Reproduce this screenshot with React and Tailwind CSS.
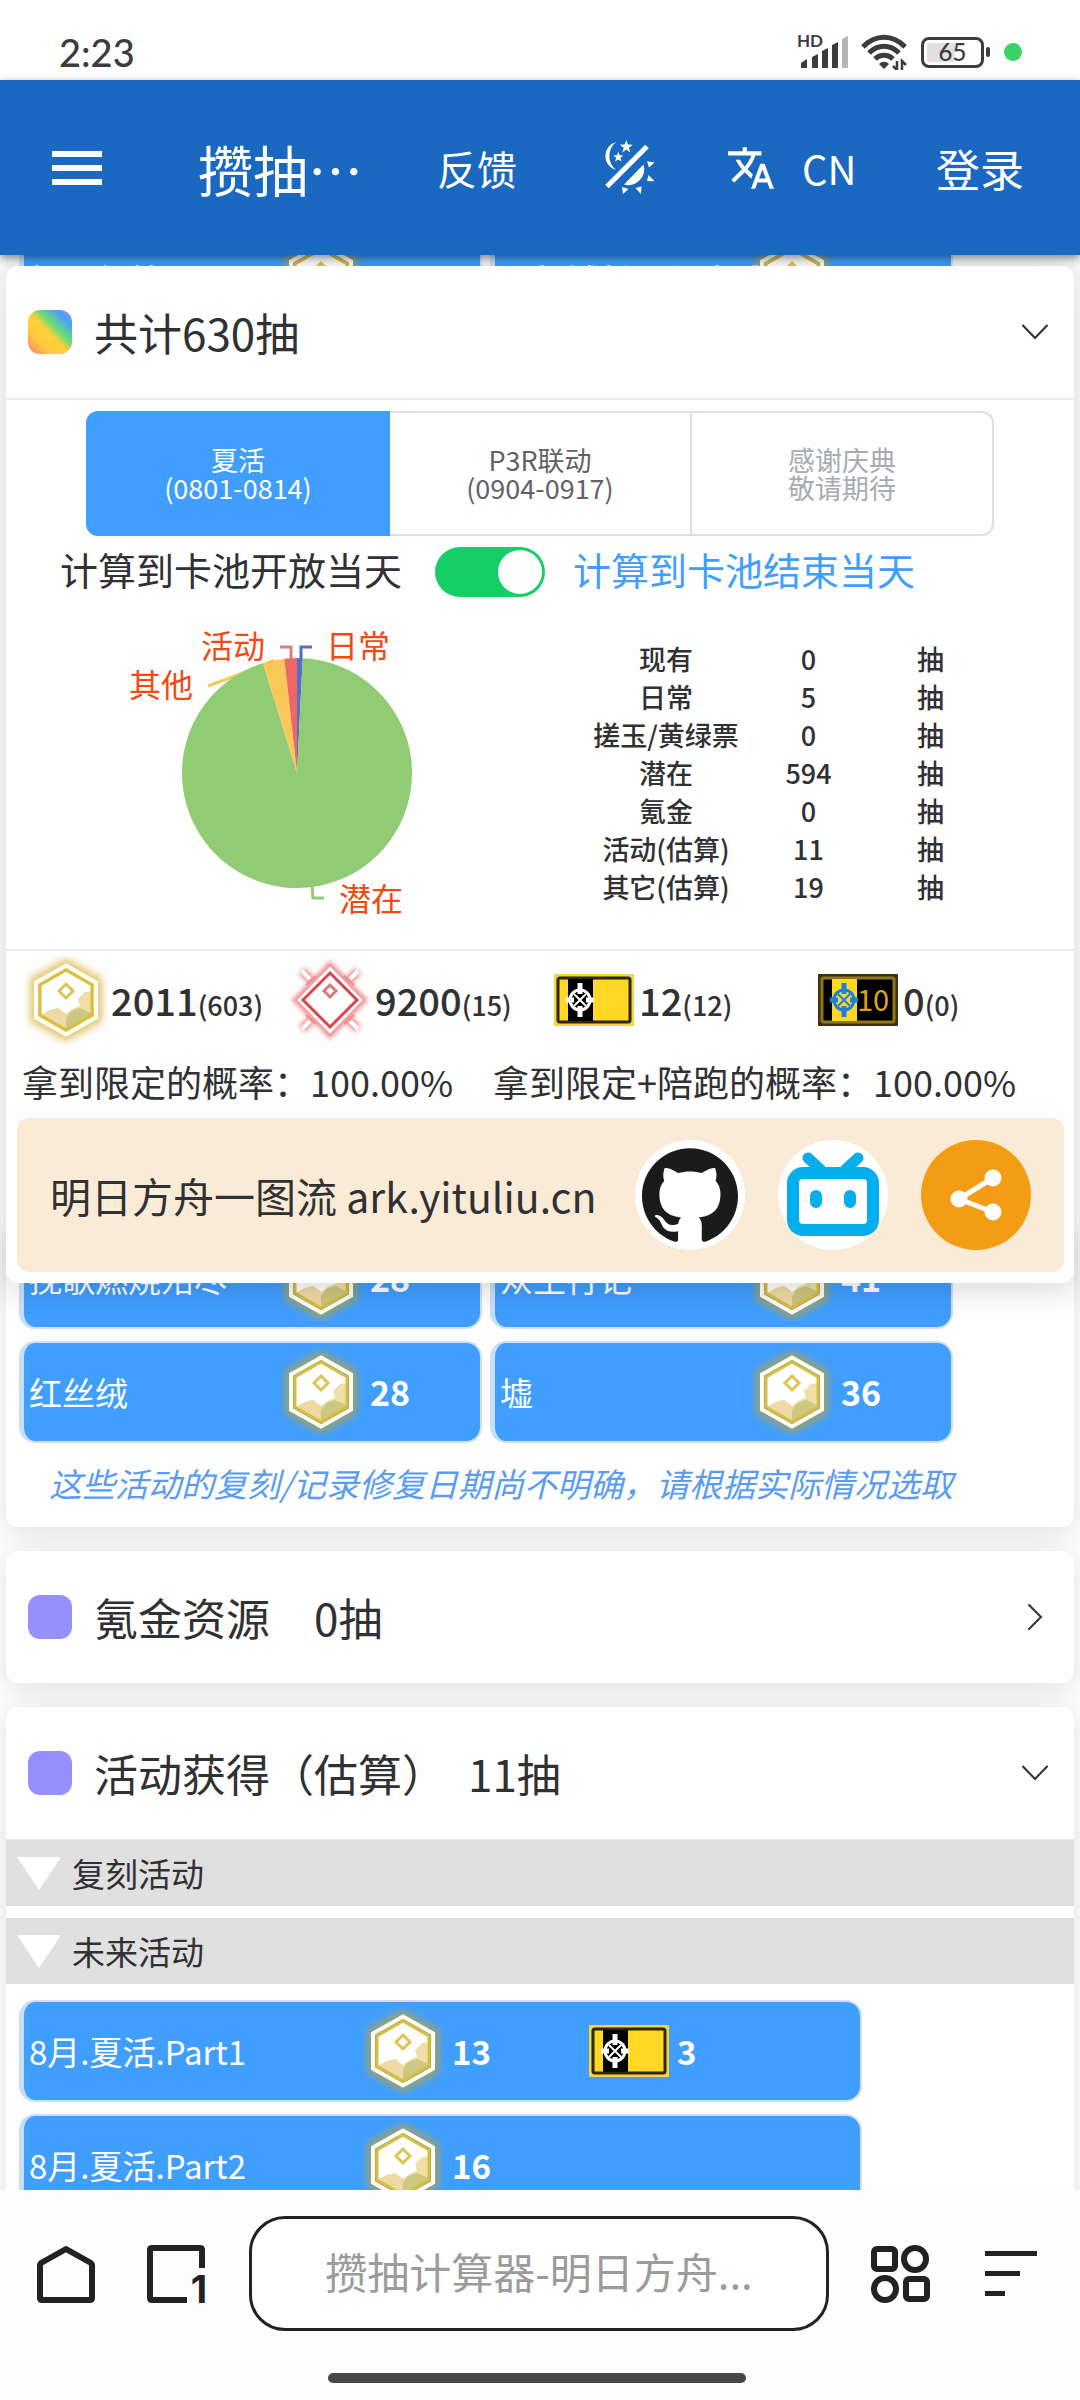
import { useState } from "react";
import { MdTranslate } from "react-icons/md";
import { SiGithub } from "react-icons/si";

const PIE = [
  { name: "日常", value: 5, color: "#5470c6" },
  { name: "潜在", value: 594, color: "#91cc75" },
  { name: "其他", value: 19, color: "#fac858" },
  { name: "活动", value: 11, color: "#ee6666" },
];

const SUMMARY = [
  { label: "现有", value: 0 },
  { label: "日常", value: 5 },
  { label: "搓玉/黄绿票", value: 0 },
  { label: "潜在", value: 594 },
  { label: "氪金", value: 0 },
  { label: "活动(估算)", value: 11 },
  { label: "其它(估算)", value: 19 },
];

const POOLS = [
  { id: "summer", name: "夏活", date: "(0801-0814)" },
  { id: "p3r", name: "P3R联动", date: "(0904-0917)" },
  { id: "thanks", name: "感谢庆典", date: "敬请期待", disabled: true },
];

/* ---------- 图标 ---------- */

function Orundum() {
  return (
    <svg viewBox="0 0 84 88" className="h-[88px] w-[84px] shrink-0" aria-hidden="true">
      <defs>
        <filter id="glow" x="-20%" y="-20%" width="140%" height="140%">
          <feGaussianBlur stdDeviation="4" />
        </filter>
      </defs>
      <path
        d="M42 8 73 25V63L42 80 11 63V25Z"
        fill="none"
        stroke="#cfa51a"
        strokeWidth="8"
        opacity="0.8"
        filter="url(#glow)"
      />
      <path d="M42 13 68 28V60L42 75 16 60V28Z" fill="#fff" />
      <path d="M68 35 61 36 54 43 56 50 50 52 42 58 34 52 26 54 17 59 42 74 67 60Z" fill="#efdfa6" />
      <path d="M42 58 34 52 26 54 17 59 42 74Z" fill="#efd9a4" />
      <path d="M47 55 56 52 67 57V60L42 74V62Z" fill="#b4b869" opacity="0.6" />
      <path d="M42 9.500 72 26.500V61.500L42 78.500 12 61.500V26.500Z" fill="none" stroke="#fffdf0" strokeWidth="4" />
      <path d="M42 14 68 29V59L42 74 16 59V29Z" fill="none" stroke="#d9bd3c" strokeWidth="3" />
      <path d="m42 28 7 7-7 7-7-7Z" fill="#fff" stroke="#dcc455" strokeWidth="3" />
    </svg>
  );
}

function Originite() {
  return (
    <svg viewBox="0 0 84 88" className="h-[88px] w-[84px] shrink-0" aria-hidden="true">
      <defs>
        <filter id="redGlow" x="-20%" y="-20%" width="140%" height="140%">
          <feGaussianBlur stdDeviation="2" />
        </filter>
      </defs>
      <g fill="none" stroke="#ee6b70" filter="url(#redGlow)" opacity="0.7">
        <path d="M42 9 76 44 42 79 8 44Z" strokeWidth="6" />
        <path d="M14 15 24 25M70 15 60 25M14 73 24 63M70 73 60 63" strokeWidth="9" />
      </g>
      <path d="M42 9 76 44 42 79 8 44Z" fill="#fff" stroke="#f2a0a2" strokeWidth="2" />
      <path
        d="m18 29 10-9M56 20l10 9M18 59l10 9M56 68l10-9"
        fill="none"
        stroke="#f08d90"
        strokeWidth="2"
      />
      <path d="m14 15 8 8M70 15l-8 8M14 73l8-8M70 73l-8-8" fill="none" stroke="#fff" strokeWidth="4" />
      <path d="M42 17 69 44 42 71 15 44Z" fill="#fff" stroke="#d9474c" strokeWidth="3" />
      <path d="m42 29 6 6-6 6-6-6Z" fill="#fff" stroke="#d77a7d" strokeWidth="3" />
    </svg>
  );
}

function Ticket({ ten = false }) {
  return (
    <svg viewBox="0 0 84 52" className="h-[52px] w-[84px] shrink-0" aria-hidden="true">
      <rect x="2" y="0" width="80" height="52" rx="1" fill={ten ? "#3b3214" : "#f3d73c"} />
      <rect x="6" y="4" width="72" height="44" rx="2" fill={ten ? "#000" : "#ffd724"} stroke={ten ? "#8f7716" : "#2d2708"} strokeWidth="3" />
      <rect x="16" y="5" width="25" height="42" fill={ten ? "#ffd724" : "#000"} />
      <g stroke={ten ? "#1f7fdc" : "#fff"} fill="none">
        <circle cx="28" cy="26" r="10" strokeWidth="3" />
        <path d="M28 9v11M28 32v11M14 26h8M34 26h8" strokeWidth="5" />
        <path d="m22 20 12 12M34 20 22 32" strokeWidth="2" />
      </g>
      {ten && (
        <text x="57" y="37" textAnchor="middle" fontSize="29" fontFamily="Noto Sans CJK SC, sans-serif" fill="#dda51e">
          10
        </text>
      )}
    </svg>
  );
}

function Chevron({ open }) {
  return (
    <svg viewBox="0 0 28 28" className="size-7 shrink-0" fill="none" stroke="#303133" strokeWidth="2" strokeLinecap="round" aria-hidden="true">
      <path d={open ? "M2 7.500 14 20 26 7.500" : "M8 2 20 14 8 26"} />
    </svg>
  );
}

function ThemeIcon() {
  return (
    <svg viewBox="0 0 56 56" className="size-14" fill="#fff" aria-hidden="true">
      <path d="M16 2A14.500 14.500 0 0 0 16 30 18 18 0 0 1 16 2Z" />
      <path d="m26.300 0 1.600 4.600 4.900.1-3.900 3 1.400 4.700-4-2.800-4 2.800 1.400-4.700-3.900-3 4.900-.1Z" />
      <path d="m18.300 11.800 1.300 3.500 3.800.2-3 2.300 1.100 3.700-3.200-2.100-3.200 2.100 1.100-3.700-3-2.300 3.800-.2Z" />
      <path d="M7 46.500 47 6.500" stroke="#fff" strokeWidth="5" />
      <path d="M43.500 24.500A16 16 0 0 1 24 44.500Z" />
      <path d="m47 21.300 7.500 1.200-5.500 5ZM47 41l1.500-6 6 6.300ZM35.500 48l6-1.500-.6 7.500ZM22 47l6.500 2-5.500 5Z" />
    </svg>
  );
}

/* ---------- 状态栏 ---------- */

function StatusBar() {
  return (
    <div className="flex h-20 shrink-0 items-center bg-[#fefefe] pt-6 pr-[58px] pb-0 pl-[59px] text-[#3c3c3c]">
      <span className="font-['Lato',sans-serif] text-[38px] leading-10 font-medium">2:23</span>
      <div className="ml-auto flex items-center">
        <svg viewBox="0 0 52 34" className="h-[34px] w-[52px] overflow-visible" aria-hidden="true">
          <text x="-1" y="12" fontSize="17" fontWeight="700" fontFamily="Lato, sans-serif" fill="#3c3c3c">
            HD
          </text>
          <g fill="#3c3c3c">
            <path d="M3 33v-5l6-4v9ZM14 33V22l6-3v14ZM24 33V16l6-3v20ZM34 33V10l6-3v26Z" />
            <path d="M44 33V4l6-3v32Z" fill="#b5b5b5" />
          </g>
        </svg>
        <svg viewBox="0 0 46 36" className="ml-[11px] h-9 w-[46px]" fill="none" stroke="#3c3c3c" aria-hidden="true">
          <path d="M2 13C14 0 32 0 44 13" strokeWidth="5" />
          <path d="M8 19C17 10 29 10 38 19" strokeWidth="5" />
          <path d="M14 25c5-5 13-5 18 0" strokeWidth="5" />
          <path d="m18 30 5 5 5-5c-3-3-7-3-10 0Z" fill="#3c3c3c" stroke="none" />
          <path d="M36 27v9l-4-4M41 36v-9l4 4" strokeWidth="2.500" />
        </svg>
        <div className="ml-[14px] h-[31px] w-[63px] rounded-lg border-3 border-[#3c3c3c] p-[3px]">
          <div className="flex h-full items-center justify-center rounded-xs bg-linear-to-r from-[#e0e0e0] from-55% to-white to-55% font-['Lato',sans-serif] text-2xl leading-6 font-medium">
            65
          </div>
        </div>
        <span className="ml-0.5 h-2.5 w-1 rounded-sm bg-[#3c3c3c]" />
        <span className="ml-[14px] size-[18px] rounded-full bg-[#3ad267]" />
      </div>
    </div>
  );
}

function AppHeader() {
  return (
    <header className="relative z-20 flex h-[175px] shrink-0 items-center bg-[#1b68c0] pr-14 pl-[52px] whitespace-nowrap text-white shadow-[0_3px_8px_rgba(0,0,0,0.45)]">
      <button type="button" aria-label="菜单">
        <svg viewBox="0 0 50 34" className="h-[34px] w-[50px]" fill="#fff" aria-hidden="true">
          <path d="M0 0h50v6H0ZM0 14h50v6H0ZM0 28h50v6H0Z" />
        </svg>
      </button>
      <h1 className="ml-24 text-[55px] leading-[60px]">攒抽…</h1>
      <button type="button" className="ml-[74px] text-[40px] leading-[44px]">
        反馈
      </button>
      <button type="button" aria-label="切换主题" className="ml-[83px]">
        <ThemeIcon />
      </button>
      <button type="button" className="ml-[70px] flex items-center gap-[26px] text-[40px] leading-[44px]">
        <MdTranslate className="size-[50px]" aria-hidden="true" />
        CN
      </button>
      <button type="button" className="ml-auto text-[44px] leading-[44px]">
        登录
      </button>
    </header>
  );
}

/* ---------- 统计卡片 ---------- */

function SectionHeader({ title, open, rainbow = false, onClick }) {
  return (
    <button type="button" aria-expanded={open} onClick={onClick} className="flex h-[132px] w-full items-center pr-[25px] pl-[22px] text-left">
      <span
        className={
          rainbow
            ? "size-11 rounded-xl bg-[linear-gradient(45deg,#ff7a6b_0%,#ffcc3d_28%,#ffcf3a_48%,#63dd76_62%,#4d9ffb_82%,#9a8cf0_100%)]"
            : "size-11 rounded-xl bg-[#9590ff]"
        }
      />
      <span className="ml-[22px] flex-1 text-[44px] leading-[60px] whitespace-pre">{title}</span>
      <Chevron open={open} />
    </button>
  );
}

function slicePath(from, to, cx, cy, r) {
  const point = (t) => {
    const a = t * 2 * Math.PI - Math.PI / 2;
    return `${(cx + r * Math.cos(a)).toFixed(2)} ${(cy + r * Math.sin(a)).toFixed(2)}`;
  };
  const large = to - from > 0.5 ? 1 : 0;
  return `M${cx} ${cy}L${point(from)}A${r} ${r} 0 ${large} 1 ${point(to)}Z`;
}

function PieChart() {
  const total = PIE.reduce((sum, d) => sum + d.value, 0);
  let acc = 0;
  const slices = PIE.map((d) => {
    const from = acc / total;
    acc += d.value;
    return { ...d, path: slicePath(from, acc / total, 291, 165, 115) };
  });

  return (
    <svg viewBox="0 0 584 341" className="h-[341px] w-[584px]" role="img" aria-label="抽数构成">
      <g fill="none" strokeWidth="3">
        <path d="M202 78Q236 66 268 52" stroke="#fac858" />
        <path d="M274 39h11v14" stroke="#e07b80" />
        <path d="M306 39h-11v14" stroke="#5470c6" />
        <path d="M306 278l1 12h11" stroke="#91cc75" />
      </g>
      {slices.map((s) => (
        <path key={s.name} d={s.path} fill={s.color} />
      ))}
      <g fontSize="32" fontFamily="Noto Sans CJK SC, sans-serif" fill="#f04a12">
        <text x="195" y="50">活动</text>
        <text x="320" y="50">日常</text>
        <text x="123" y="89">其他</text>
        <text x="333" y="303">潜在</text>
      </g>
    </svg>
  );
}

function PoolPicker() {
  const [pool, setPool] = useState("summer");
  return (
    <div role="radiogroup" aria-label="卡池" className="mx-20 flex h-[125px] text-center text-[27px] leading-7 text-[#606266]">
      {POOLS.map((p) => (
        <label
          key={p.id}
          className="-ml-0.5 flex flex-1 flex-col justify-center border-2 border-[#dcdfe6] first:ml-0 first:rounded-l-xl last:rounded-r-xl has-checked:relative has-checked:border-[#409eff] has-checked:bg-[#409eff] has-checked:text-white has-disabled:text-[#a8abb2]"
        >
          <input
            type="radio"
            name="pool"
            className="sr-only"
            checked={pool === p.id}
            disabled={p.disabled}
            onChange={() => setPool(p.id)}
          />
          <span>{p.name}</span>
          <span>{p.date}</span>
        </label>
      ))}
    </div>
  );
}

function Resource({ icon, count, draws }) {
  return (
    <div className="flex items-center gap-[3px]">
      {icon}
      <span className="pt-1 text-[38px] leading-10 font-medium">
        {count}
        <span className="text-[27px]">({draws})</span>
      </span>
    </div>
  );
}

function SummaryCard() {
  const [open, setOpen] = useState(true);
  const [untilEnd, setUntilEnd] = useState(true);

  return (
    <section className="relative z-10 mx-1.5 rounded-xl bg-[#fefefe] pb-[11px] shadow-[0_6px_32px_rgba(0,0,0,0.16)]">
      <SectionHeader title="共计630抽" open={open} rainbow onClick={() => setOpen(!open)} />
      <div className="border-t-2 border-[#ebebeb] pt-[11px]">
        <PoolPicker />
        <div className="flex h-[72px] items-center pl-[54px] text-[38px] leading-[50px]">
          <span className="pb-1.5">计算到卡池开放当天</span>
          <input
            id="until-end"
            type="checkbox"
            role="switch"
            checked={untilEnd}
            onChange={() => setUntilEnd(!untilEnd)}
            className="ml-[33px] flex h-[50px] w-[110px] appearance-none items-center rounded-full bg-[#dcdfe6] px-[3px] before:size-11 before:rounded-full before:bg-white checked:justify-end checked:bg-[#16ce66]"
          />
          <label htmlFor="until-end" className="ml-7 pb-1.5 text-[#409eff]">
            计算到卡池结束当天
          </label>
        </div>
        <div className="flex">
          <PieChart />
          <table className="mt-8 h-[266px] w-[396px] table-fixed text-center text-[27px] leading-[38px] font-medium">
            <colgroup>
              <col className="w-[152px]" />
              <col className="w-[133px]" />
              <col />
            </colgroup>
            <tbody>
              {SUMMARY.map((row) => (
                <tr key={row.label}>
                  <td className="p-0 whitespace-nowrap">{row.label}</td>
                  <td className="p-0">{row.value}</td>
                  <td className="p-0">抽</td>
                </tr>
              ))}
            </tbody>
          </table>
        </div>
      </div>
      <div className="border-t-2 border-[#ebebeb] pl-[18px]">
        <div className="-mr-1.5 grid h-[98px] grid-cols-4">
          <Resource icon={<Orundum />} count="2011" draws="603" />
          <Resource icon={<Originite />} count="9200" draws="15" />
          <Resource icon={<Ticket />} count="12" draws="12" />
          <Resource icon={<Ticket ten />} count="0" draws="0" />
        </div>
      </div>
      <div className="flex h-[69px] items-center gap-10 pb-1.5 pl-4 text-[36px] leading-[50px] whitespace-nowrap">
        <span>拿到限定的概率：100.00%</span>
        <span>拿到限定+陪跑的概率：100.00%</span>
      </div>
      <div className="ml-[11px] mr-2.5 flex h-[154px] items-center gap-[33px] rounded-xl bg-[#faebd7] pr-[33px] pl-[33px]">
        <span className="flex-1 text-[41px] leading-[50px] whitespace-nowrap">明日方舟一图流 ark.yituliu.cn</span>
        <a href="#github" aria-label="GitHub" className="flex size-[110px] items-center justify-center rounded-full bg-white">
          <SiGithub className="size-24 text-[#1b1b1b]" />
        </a>
        <a href="#bilibili" aria-label="哔哩哔哩" className="size-[110px] rounded-full bg-white">
          <svg viewBox="0 0 110 110" fill="none" stroke="#04aeec" aria-hidden="true">
            <rect x="15" y="33" width="80" height="57" rx="10" strokeWidth="12" />
            <path d="m30 18 13 12M80 18 67 30" strokeWidth="11" strokeLinecap="round" />
            <path d="M38 56v6M72 56v6" strokeWidth="12" strokeLinecap="round" />
          </svg>
        </a>
        <button type="button" aria-label="分享" className="size-[110px] rounded-full bg-[#f39c14]">
          <svg viewBox="0 0 110 110" fill="#fff" stroke="#fff" aria-hidden="true">
            <path d="M72 38 38 59 72 72" fill="none" strokeWidth="5" />
            <g stroke="none">
              <circle cx="72" cy="38" r="8.500" />
              <circle cx="38" cy="59" r="8.500" />
              <circle cx="72" cy="72" r="8.500" />
            </g>
          </svg>
        </button>
      </div>
    </section>
  );
}

/* ---------- 活动列表 ---------- */

function ActivityItem({ name, count }) {
  return (
    <button
      type="button"
      className="flex h-[102px] w-[463px] items-center rounded-2xl border-2 border-l-[5px] border-[#d3dfef] border-l-[#c9dff7] bg-[#409eff] pl-[5px] text-left text-[33px] leading-10 whitespace-nowrap text-white"
    >
      <span className="w-[250px]">{name}</span>
      <Orundum />
      <span className="ml-[7px] text-[34px] font-bold">{count}</span>
    </button>
  );
}

function FutureItem({ name, count, tickets }) {
  return (
    <button
      type="button"
      className="flex h-[102px] w-[843px] items-center rounded-2xl border-2 border-l-[5px] border-[#d3dfef] border-l-[#c9dff7] bg-[#409eff] pl-[5px] text-left text-[33px] leading-10 whitespace-nowrap text-white"
    >
      <span className="w-[332px]">{name}</span>
      <Orundum />
      <span className="w-[142px] pl-[7px] text-[33px] font-bold">{count}</span>
      {tickets && (
        <>
          <Ticket />
          <span className="pl-1.5 text-[33px] font-bold">{tickets}</span>
        </>
      )}
    </button>
  );
}

function GroupBar({ title }) {
  return (
    <div className="flex h-[66px] items-center bg-[#e0e0e0] pl-[11px] text-[33px] leading-10">
      <svg viewBox="0 0 44 33" className="h-[33px] w-11" fill="#fff" aria-hidden="true">
        <path d="M0 0h44L22 33Z" />
      </svg>
      <span className="ml-[11px]">{title}</span>
    </div>
  );
}

function BottomBar() {
  return (
    <footer className="flex h-[210px] shrink-0 flex-col items-center bg-[#fdfdfd]">
      <div className="mt-[26px] flex h-[115px] w-full items-center pr-[43px] pl-[37px]">
        <button type="button" aria-label="主页">
          <svg viewBox="0 0 58 58" className="size-[58px]" fill="none" stroke="#222" strokeWidth="6" strokeLinejoin="round" aria-hidden="true">
            <path d="M3 20Q3 19 4 18L29 4 54 18Q55 19 55 20V53Q55 55 53 55H5Q3 55 3 53Z" />
          </svg>
        </button>
        <button type="button" aria-label="标签页" className="ml-[52px]">
          <svg viewBox="0 0 60 58" className="h-[58px] w-[60px]" fill="none" stroke="#222" strokeWidth="6" aria-hidden="true">
            <path d="M55 23V5Q55 3 53 3H5Q3 3 3 5V53Q3 55 5 55H40" />
            <text x="52" y="58" textAnchor="middle" fontSize="38" fontWeight="700" fontFamily="Inter, sans-serif" fill="#222" stroke="none">
              1
            </text>
          </svg>
        </button>
        <input
          type="text"
          aria-label="搜索或输入网址"
          placeholder="攒抽计算器-明日方舟..."
          className="ml-[42px] h-full min-w-0 flex-1 rounded-[36px] border-3 border-[#222] bg-[#fefefe] pb-1.5 text-center text-[42px] placeholder:text-[#9b9b9b]"
        />
        <button type="button" aria-label="应用" className="ml-[41px]">
          <svg viewBox="0 0 60 58" className="h-[58px] w-[60px]" fill="none" stroke="#222" strokeWidth="6" aria-hidden="true">
            <rect x="4" y="4" width="21" height="20" rx="3" />
            <circle cx="45" cy="14" r="11" />
            <circle cx="15" cy="44" r="11" />
            <rect x="36" y="34" width="21" height="20" rx="3" />
          </svg>
        </button>
        <button type="button" aria-label="更多" className="ml-[55px]">
          <svg viewBox="0 0 52 46" className="h-[46px] w-[52px]" fill="#222" aria-hidden="true">
            <path d="M0 0h52v5H0ZM0 20h35v5H0ZM0 40h20v5H0Z" />
          </svg>
        </button>
      </div>
      <div className="mt-[42px] mr-1.5 h-2.5 w-[418px] rounded-full bg-[#474747]" />
    </footer>
  );
}

export default function App() {
  const [payOpen, setPayOpen] = useState(false);
  const [eventOpen, setEventOpen] = useState(true);

  return (
    <div className="flex h-screen flex-col overflow-hidden bg-[#fefefe] font-['Noto_Sans_CJK_SC',sans-serif] text-[#303133]">
      <StatusBar />
      <AppHeader />
      <main className="min-h-0 flex-1 overflow-hidden">
        {/* 被统计卡片盖住的活动列表，只露出一条边 */}
        <div className="mx-1.5 flex h-[11px] flex-col justify-center overflow-hidden bg-[#f4f4f4] shadow-[0_6px_32px_rgba(0,0,0,0.16)]">
          <div className="mt-[37px] flex shrink-0 gap-2 pl-[13px]">
            <ActivityItem name="绿野幻梦" count={21} />
            <ActivityItem name="理想城长夏狂欢季" count={35} />
          </div>
        </div>

        <SummaryCard />

        <section className="mx-1.5 -mt-14 rounded-xl bg-[#fefefe] pb-5 shadow-[0_6px_32px_rgba(0,0,0,0.12)]">
          <div className="flex flex-wrap gap-x-2 gap-y-3 pl-[13px]">
            <ActivityItem name="挽歌燃烧殆尽" count={28} />
            <ActivityItem name="众生行记" count={41} />
            <ActivityItem name="红丝绒" count={28} />
            <ActivityItem name="墟" count={36} />
          </div>
          <p className="pt-4 pl-[43px] text-[33px] leading-12 text-[#5a9cf2] italic">
            这些活动的复刻/记录修复日期尚不明确，请根据实际情况选取
          </p>
        </section>

        <section className="mx-1.5 mt-6 rounded-xl bg-[#fefefe] shadow-[0_6px_32px_rgba(0,0,0,0.12)]">
          <SectionHeader title="氪金资源　0抽" open={payOpen} onClick={() => setPayOpen(!payOpen)} />
        </section>

        <section className="mx-1.5 mt-6 rounded-xl bg-[#fefefe] shadow-[0_6px_32px_rgba(0,0,0,0.12)]">
          <SectionHeader title="活动获得（估算）　11抽" open={eventOpen} onClick={() => setEventOpen(!eventOpen)} />
          <div className="flex flex-col gap-3 border-t border-[#ebebeb]">
            <GroupBar title="复刻活动" />
            <GroupBar title="未来活动" />
          </div>
          <div className="mt-4 flex flex-col gap-3 pb-4 pl-[13px]">
            <FutureItem name="8月.夏活.Part1" count={13} tickets={3} />
            <FutureItem name="8月.夏活.Part2" count={16} />
          </div>
        </section>
      </main>
      <BottomBar />
    </div>
  );
}
